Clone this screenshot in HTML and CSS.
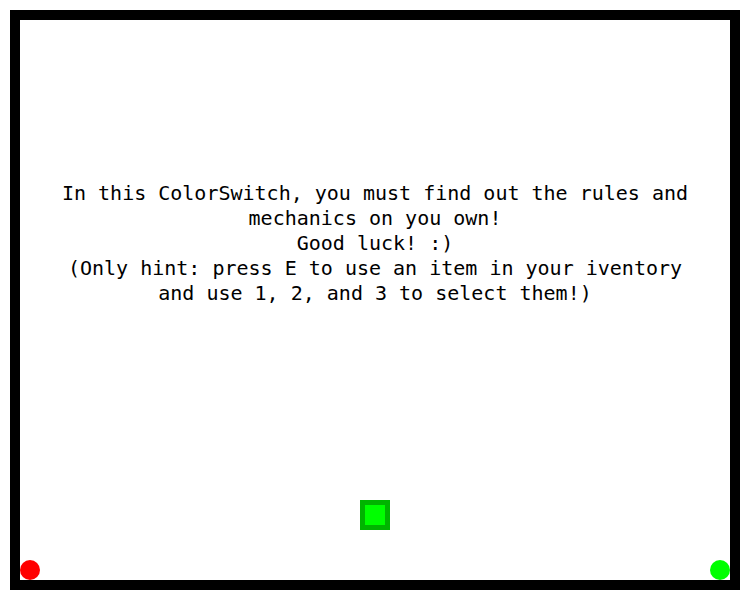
FILE: index.html
```html
<!DOCTYPE html>
<html>
<head>
<meta charset="utf-8">
<link rel="stylesheet" href="styles.css">
</head>
<body>
<div class="frame">
  <div class="message">
    <div>In this ColorSwitch, you must find out the rules and</div>
    <div>mechanics on you own!</div>
    <div>Good luck! :)</div>
    <div>(Only hint: press E to use an item in your iventory</div>
    <div>and use 1, 2, and 3 to select them!)</div>
  </div>
  <div class="player"></div>
  <div class="dot dot-red"></div>
  <div class="dot dot-green"></div>
</div>
</body>
</html>
```
FILE: styles.css
```css
html, body {
  margin: 0;
  padding: 0;
  background: #ffffff;
}
.frame {
  position: relative;
  box-sizing: content-box;
  width: 710px;
  height: 560px;
  margin: 10px;
  border: 10px solid #000000;
  background: #ffffff;
}
.message {
  padding-top: 161px;
  text-align: center;
  font-family: "DejaVu Sans Mono", monospace;
  font-size: 20px;
  line-height: 25px;
  color: #000000;
}
.player {
  position: absolute;
  left: 340px;
  top: 480px;
  width: 20px;
  height: 20px;
  border: 5px solid #00b400;
  background: #00ff00;
}
.dot {
  position: absolute;
  top: 540px;
  width: 20px;
  height: 20px;
  border-radius: 50%;
}
.dot-red {
  left: 0;
  background: #ff0000;
}
.dot-green {
  left: 690px;
  background: #00ff00;
}
```
